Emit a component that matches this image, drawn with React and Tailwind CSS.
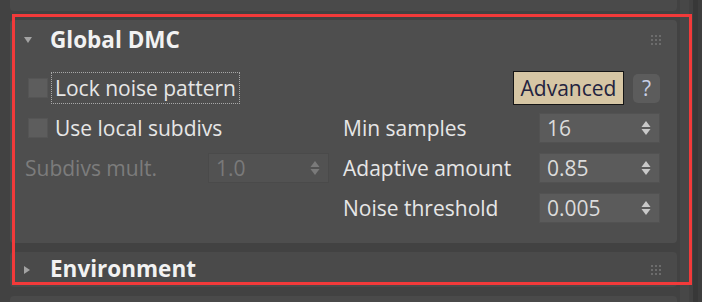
import React from 'react';

const font = { fontFamily: '"Open Sans", "Liberation Sans", sans-serif' };

function Grip() {
    return (
        <div className="grid grid-cols-3 gap-[2px]">
            {[0, 1, 2, 3, 4, 5, 6, 7, 8].map(i => (
                <div key={i} className="w-[2px] h-[2px] bg-[#6c6c6c]" />
            ))}
        </div>
    );
}

function Spinner({ disabled }) {
    const c = disabled ? 'text-[#7a7a7a]' : 'text-[#c9c9c9]';
    return (
        <svg width="10" height="16" viewBox="0 0 10 16" className={c}>
            <path d="M5 1 L9.5 7 L0.5 7 Z" fill="currentColor" />
            <path d="M0.5 9 L9.5 9 L5 15 Z" fill="currentColor" />
        </svg>
    );
}

function SpinBox({ value, disabled }) {
    return (
        <div className={`w-[121px] h-[30px] flex items-center justify-between pl-[7px] pr-[8px] border ${disabled ? 'bg-[#525252] border-[#4a4a4a] text-[#7a7a7a]' : 'bg-[#5b5b5b] border-[#525252] text-[#dcdcdc]'}`}>
            <span className="text-[21px] leading-none">{value}</span>
            <Spinner disabled={disabled} />
        </div>
    );
}

function CheckBox({ label, focused }) {
    return (
        <div className="flex items-center h-full">
            <div className="w-[20px] h-[20px] ml-[3px] bg-[#5d5d5d] border border-[#555]" />
            <div className={`ml-[3px] h-[32px] flex items-center px-[3px] ${focused ? 'border border-dotted border-[#a8a8a8]' : 'border border-transparent'}`}>
                <span className="text-[21px] text-[#e6e6e6] leading-none">{label}</span>
            </div>
        </div>
    );
}

function Label({ children }) {
    return <span className="text-[21px] text-[#e6e6e6] leading-none">{children}</span>;
}

function Arrow({ open }) {
    return (
        <div className="w-[26px] flex items-center">
            {open ? (
                <svg width="8" height="6" viewBox="0 0 8 6"><path d="M0 0 L8 0 L4 6 Z" fill="#a3a3a3" /></svg>
            ) : (
                <svg width="6" height="8" viewBox="0 0 6 8"><path d="M0 0 L6 4 L0 8 Z" fill="#a3a3a3" /></svg>
            )}
        </div>
    );
}

export default function App() {
    return (
        <div className="relative w-[702px] h-[302px] bg-[#424242] overflow-hidden flex" style={font}>
            <div className="w-[680px] pl-[10px] pr-[3px] flex flex-col gap-[9px]">
                <div className="shrink-0 h-[11px] bg-[#4a4a4a] rounded-b-[4px]" />
                <div className="shrink-0 h-[223px] bg-[#4e4e4e] rounded-[4px]">
                    <div className="h-[40px] flex items-center pl-[14px] pr-[16px]">
                        <Arrow open />
                        <span className="text-[22.5px] font-bold text-[#f2f2f2] leading-none flex-1">Global DMC</span>
                        <Grip />
                    </div>
                    <div className="mt-[8px] pl-[15px] pr-[17px] grid grid-cols-[318px_1fr] grid-rows-[40px_40px_40px_40px]">
                        <CheckBox label="Lock noise pattern" focused />
                        <div className="flex items-center justify-end gap-[9px]">
                            <button className="w-[111px] h-[34px] bg-[#d6c6a4] border border-[#151515] text-[21px] text-[#23233f] leading-none">Advanced</button>
                            <div className="w-[27px] h-[29px] rounded-[5px] bg-[#5c5c5c] flex items-center justify-center text-[21px] text-[#c8d0e6] leading-none">?</div>
                        </div>
                        <CheckBox label="Use local subdivs" />
                        <div className="flex items-center justify-between">
                            <Label>Min samples</Label>
                            <SpinBox value="16" />
                        </div>
                        <div className="flex items-center justify-between pr-[14px]">
                            <span className="text-[21px] text-[#7c7c7c] leading-none">Subdivs mult.</span>
                            <SpinBox value="1.0" disabled />
                        </div>
                        <div className="flex items-center justify-between">
                            <Label>Adaptive amount</Label>
                            <SpinBox value="0.85" />
                        </div>
                        <div />
                        <div className="flex items-center justify-between">
                            <Label>Noise threshold</Label>
                            <SpinBox value="0.005" />
                        </div>
                    </div>
                </div>
                <div className="shrink-0 h-[35px] bg-[#4a4a4a] rounded-[4px] flex items-center pl-[14px] pr-[16px]">
                    <Arrow />
                    <span className="text-[22.5px] font-bold text-[#f2f2f2] leading-none flex-1">Environment</span>
                    <Grip />
                </div>
                <div className="shrink-0 h-[20px] bg-[#4a4a4a] rounded-t-[4px]" />
            </div>
            <div className="flex-1 flex">
                <div className="w-[9px] bg-[#474747]" />
                <div className="w-[4px] bg-[#424242]" />
                <div className="w-[5px] bg-[#383838]" />
                <div className="flex-1 bg-[#3e3e3e]" />
            </div>
            <div className="absolute left-[12px] top-[14px] w-[680px] h-[271px] border-[3px] border-[#f23a3a] pointer-events-none" />
        </div>
    );
}
